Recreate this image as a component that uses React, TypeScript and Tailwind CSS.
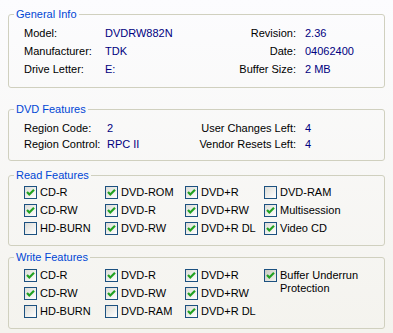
import React from "react";

const font = { fontFamily: '"Liberation Sans", Arial, sans-serif' };

function Box({ title, className, children }: { title: string; className?: string; children: React.ReactNode }) {
  return (
    <fieldset className={`border border-[#d0d0bf] rounded-[3px] px-0 ${className ?? ""}`}>
      <legend className="ml-[5px] px-[2px] text-[11px] leading-[13px] text-[#0046d5]">{title}</legend>
      {children}
    </fieldset>
  );
}

function Check({ on, label, hover, multi }: { on: boolean; label: React.ReactNode; hover?: boolean; multi?: boolean }) {
  return (
    <div className="flex items-start gap-[3px]">
      <span
        className={`mt-[2px] w-[13px] h-[13px] shrink-0 border border-[#1c5180] bg-gradient-to-br ${
          hover ? "from-[#c9c9c1] to-[#f4f4f0]" : "from-[#dcdcd7] to-white"
        }`}
      >
        {on && (
          <svg width="11" height="11" viewBox="0 0 11 11">
            <path d="M2 5 L4.3 7.5 L9 2.8" fill="none" stroke="#21a121" strokeWidth="2.2" />
          </svg>
        )}
      </span>
      <span className={multi ? "mt-[2px] leading-[13px]" : "leading-[16px] whitespace-nowrap"}>{label}</span>
    </div>
  );
}

function InfoRow({ l1, v1, l2, v2, wide, h }: { l1: string; v1: string; l2: string; v2: string; wide?: boolean; h: string }) {
  return (
    <div className={`flex items-center whitespace-nowrap ${h}`}>
      <span className={wide ? "w-[83px]" : "w-[81px]"}>{l1}</span>
      <span className="flex-1 text-[#00007f]">{v1}</span>
      <span className="text-right">{l2}</span>
      <span className="ml-[9px] w-[79px] text-[#00007f]">{v2}</span>
    </div>
  );
}

export default function App() {
  const read: [string, boolean][] = [
    ["CD-R", true], ["DVD-ROM", true], ["DVD+R", true], ["DVD-RAM", false],
    ["CD-RW", true], ["DVD-R", true], ["DVD+RW", true], ["Multisession", true],
    ["HD-BURN", false], ["DVD-RW", true], ["DVD+R DL", true], ["Video CD", true],
  ];
  const write: [string, boolean][] = [
    ["CD-R", true], ["DVD-R", true], ["DVD+R", true],
    ["CD-RW", true], ["DVD-RW", true], ["DVD+RW", true],
    ["HD-BURN", false], ["DVD-RAM", false], ["DVD+R DL", true],
  ];

  return (
    <div style={font} className="w-[393px] h-[333px] bg-gradient-to-b from-[#fcfcfe] to-[#f4f3ee] px-2 pt-[8px] text-[11px] text-black">
      <Box title="General Info">
        <div className="pl-[15px] pt-[3px] pb-[9px]">
          <InfoRow h="h-[18px]" l1="Model:" v1="DVDRW882N" l2="Revision:" v2="2.36" />
          <InfoRow h="h-[18px]" l1="Manufacturer:" v1="TDK" l2="Date:" v2="04062400" />
          <InfoRow h="h-[18px]" l1="Drive Letter:" v1="E:" l2="Buffer Size:" v2="2 MB" />
        </div>
      </Box>

      <Box title="DVD Features" className="mt-[15px]">
        <div className="pl-[15px] pt-[4px] pb-[8px]">
          <InfoRow h="h-[16px]" wide l1="Region Code:" v1="2" l2="User Changes Left:" v2="4" />
          <InfoRow h="h-[16px]" wide l1="Region Control:" v1="RPC II" l2="Vendor Resets Left:" v2="4" />
        </div>
      </Box>

      <Box title="Read Features" className="mt-[8px]">
        <div className="pl-[15px] pt-[2px] pb-[7px] grid grid-cols-[81px_80px_79px_1fr] auto-rows-[18px]">
          {read.map(([l, on], i) => (
            <Check key={i} on={on} label={l} />
          ))}
        </div>
      </Box>

      <Box title="Write Features" className="mt-[5px]">
        <div className="pl-[15px] pt-[3px] pb-[7px] flex">
          <div className="grid grid-cols-[81px_80px_79px] auto-rows-[18px]">
            {write.map(([l, on], i) => (
              <Check key={i} on={on} label={l} />
            ))}
          </div>
          <Check
            on
            hover
            multi
            label={
              <>
                Buffer Underrun
                <br />
                Protection
              </>
            }
          />
        </div>
      </Box>
    </div>
  );
}
